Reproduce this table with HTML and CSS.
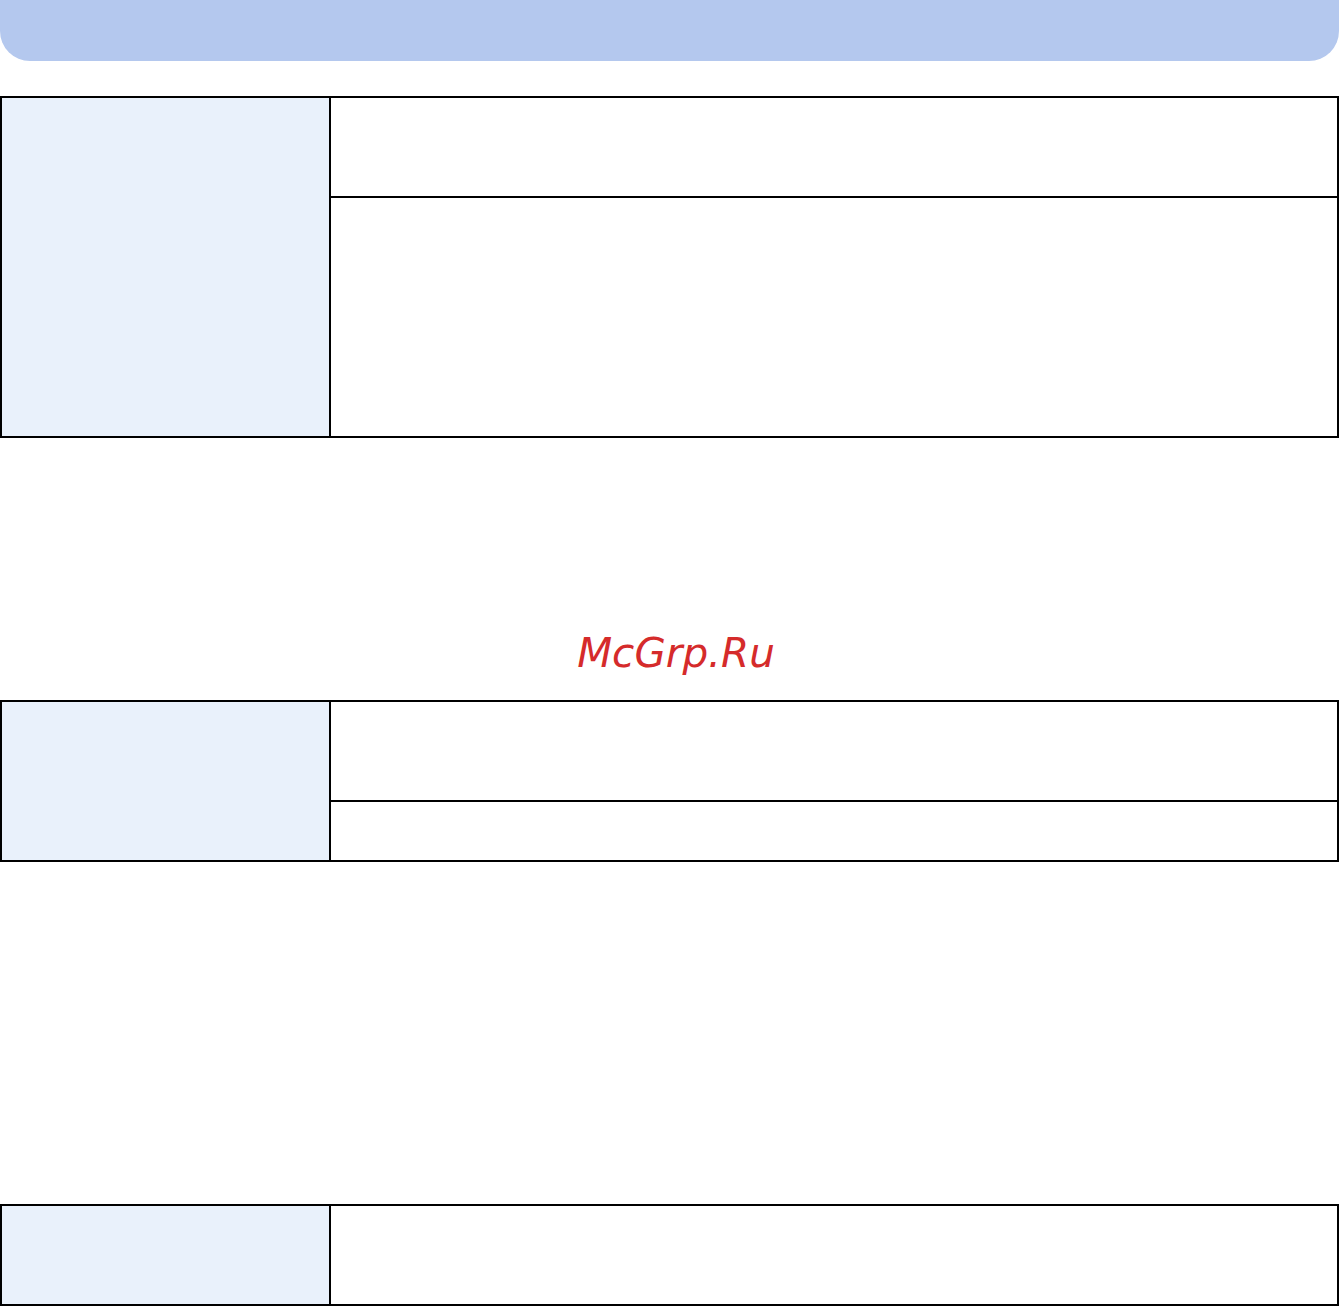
FILE: index.html
```html
<!DOCTYPE html>
<html>
<head>
<meta charset="utf-8">
<link rel="stylesheet" href="styles.css">
</head>
<body>
<div class="page">
  <div class="header-bar"></div>
  <div class="table t1">
    <div class="label-cell"></div>
    <div class="rows">
      <div class="row r98"></div>
      <div class="row r238"></div>
    </div>
  </div>
  <div class="watermark">McGrp.Ru</div>
  <div class="table t2">
    <div class="label-cell"></div>
    <div class="rows">
      <div class="row r98"></div>
      <div class="row r58"></div>
    </div>
  </div>
  <div class="table t3">
    <div class="label-cell"></div>
    <div class="rows">
      <div class="row r98"></div>
    </div>
  </div>
</div>
</body>
</html>
```
FILE: styles.css
```css
html, body {
  margin: 0;
  padding: 0;
  background: #ffffff;
}
.page {
  width: 1340px;
  display: flex;
  flex-direction: column;
}
.header-bar {
  width: 1339px;
  height: 61px;
  background: #b4c8ee;
  border-radius: 0 0 30px 30px;
}
.table {
  width: 1335px;
  border: 2px solid #000;
  display: grid;
  grid-template-columns: 329px 1fr;
}
.t1 { margin-top: 35px; }
.t2 { margin-top: 27px; }
.t3 { margin-top: 342px; }
.label-cell {
  background: #e9f1fb;
  border-right: 2px solid #000;
}
.rows {
  display: flex;
  flex-direction: column;
}
.row + .row {
  border-top: 2px solid #000;
}
.r98 { height: 98px; }
.r238 { height: 238px; }
.r58 { height: 58px; }
.watermark {
  margin-top: 195px;
  height: 40px;
  line-height: 40px;
  text-align: center;
  padding-left: 12px;
  font-family: "DejaVu Sans", sans-serif;
  font-style: italic;
  font-size: 40.5px;
  color: #d52b2b;
}
```
